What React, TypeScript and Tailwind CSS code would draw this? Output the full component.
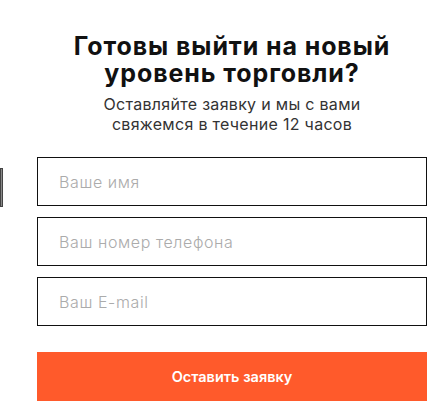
const fields = ['Ваше имя', 'Ваш номер телефона', 'Ваш E-mail'];

export default function App() {
  return (
    <div
      className="relative w-[433px] h-[412px] bg-white overflow-hidden"
      style={{ fontFamily: 'Inter, "Open Sans", sans-serif' }}
    >
      {/* cut-off element at left edge */}
      <div className="absolute left-0 top-[168px] w-[3px] h-[39px] border border-[#444] bg-[#888]" />

      <div className="pl-[37px] pr-[6px] pt-[33px]">
        <h2 className="text-center text-[25px] leading-[27px] font-bold text-[#111] tracking-[0.9px]">
          Готовы выйти на новый
          <br />
          уровень торговли?
        </h2>
        <p className="mt-[7px] text-center text-[16px] leading-[20px] text-[#333] tracking-[0.3px]">
          Оставляйте заявку и мы с вами
          <br />
          свяжемся в течение 12 часов
        </p>

        <form className="mt-[23px] flex flex-col gap-[11px]">
          {fields.map((f) => (
            <input
              key={f}
              placeholder={f}
              className="h-[49px] w-full border border-[#111] bg-white px-[21px] text-[16px] tracking-[0.6px] font-light text-[#333] placeholder:text-[#ababab] outline-none"
            />
          ))}
          <button
            type="button"
            className="mt-[15px] h-[49px] w-full bg-[#ff5a2b] text-white text-[14.5px] font-semibold"
          >
            Оставить заявку
          </button>
        </form>
      </div>
    </div>
  );
}
